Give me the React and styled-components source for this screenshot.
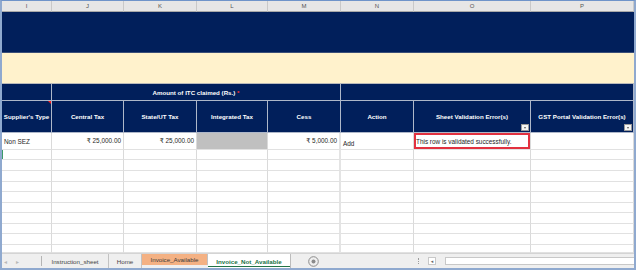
import styled, { createGlobalStyle } from 'styled-components'

const GlobalStyle = createGlobalStyle`
  html, body {
    margin: 0;
    padding: 0;
    background: #fff;
  }
  body {
    font-family: "Liberation Sans", "DejaVu Sans", Arial, sans-serif;
  }
`

const letters = ['I', 'J', 'K', 'L', 'M', 'N', 'O', 'P']
const widths = [50, 72, 73, 71, 73, 73, 117, 103]
const blankRows = [10, 11, 11, 10, 11, 10, 11, 10, 11, 8]

const headings = [
  { label: "Supplier's Type", comment: true },
  { label: 'Central Tax' },
  { label: 'State/UT Tax' },
  { label: 'Integrated Tax' },
  { label: 'Cess' },
  { label: 'Action' },
  { label: 'Sheet Validation Error(s)', filter: true },
  { label: 'GST Portal Validation Error(s)', filter: true },
]

const App = () => {
  return (
    <>
      <GlobalStyle />
      <Frame>
        <Sheet>
          {letters.map(l => (
            <LetterCell key={l}>{l}</LetterCell>
          ))}

          <Band $bg="#011f5b" />
          <Band $bg="#fff2cc" $line="#b9b9b9" />

          {/* header row 1 */}
          <HeadCell />
          <HeadCell $span={4}>
            Amount of ITC claimed (Rs.)&nbsp;<Star>*</Star>
          </HeadCell>
          <HeadCell $span={3} />

          {/* header row 2 */}
          {headings.map(h => (
            <HeadCell key={h.label}>
              {h.label}
              {h.comment && <CommentMark />}
              {h.filter && <FilterButton />}
            </HeadCell>
          ))}

          {/* data row */}
          <DataCell>Non SEZ</DataCell>
          <DataCell $align="right">₹ 25,000.00</DataCell>
          <DataCell $align="right">₹ 25,000.00</DataCell>
          <DataCell $shade />
          <DataCell $align="right" $thick>₹ 5,000.00</DataCell>
          <DataCell $bottom>Add</DataCell>
          <DataCell $flag>This row is validated successfully.</DataCell>
          <DataCell />

          {blankRows.map((h, r) =>
            widths.map((w, c) => (
              <DataCell key={r + '-' + c} $thick={c === 4} $mark={r === 0 && c === 0} />
            ))
          )}
        </Sheet>

        <TabBar>
          <NavArrows>
            <span>◂</span>
            <span>▸</span>
          </NavArrows>
          <Tab $w={67}>Instruction_sheet</Tab>
          <Tab $w={33}>Home</Tab>
          <Tab $w={66} $variant="orange">Invoice_Available</Tab>
          <Tab $w={83} $variant="active">Invoice_Not_Available</Tab>
          <AddSheet>
            <svg width="11" height="11" viewBox="0 0 11 11">
              <circle cx="5.5" cy="5.5" r="4.8" fill="none" stroke="#8a8a8a" strokeWidth="1" />
              <circle cx="5.5" cy="5.5" r="2" fill="#8a8a8a" />
            </svg>
          </AddSheet>
          <Splitter />
          <ScrollButton>◂</ScrollButton>
          <ScrollTrack />
        </TabBar>
      </Frame>
    </>
  )
}

const Frame = styled.div`
  width: 636px;
  box-sizing: border-box;
  border: 2px solid #8fa9cf;
  border-top: 1px solid #6f94c9;
  background: #fff;
`

const Sheet = styled.div`
  display: grid;
  grid-template-columns: ${widths.map(w => w + 'px').join(' ')};
  grid-template-rows: 11px 41px 31px 17px 32px 17px ${blankRows.map(h => h + 'px').join(' ')};
`

const LetterCell = styled.div`
  box-sizing: border-box;
  background: #e6e6e6;
  border-right: 1px solid #c9c9c9;
  border-bottom: 1px solid #a9a9a9;
  color: #555;
  font-size: 6px;
  display: flex;
  align-items: center;
  justify-content: center;
`

const Band = styled.div`
  grid-column: 1 / -1;
  background: ${p => p.$bg};
  border-bottom: 1px solid ${p => p.$line || '#3b4f78'};
`

const HeadCell = styled.div`
  grid-column: span ${p => p.$span || 1};
  position: relative;
  box-sizing: border-box;
  background: #011f5b;
  border-right: 1px solid #aeb7c9;
  border-bottom: 1px solid #aeb7c9;
  color: #fff;
  font-size: 6.2px;
  font-weight: 700;
  display: flex;
  align-items: center;
  justify-content: center;
  text-align: center;
  white-space: nowrap;
`

const Star = styled.span`
  color: #ff2b2b;
`

const CommentMark = styled.span`
  position: absolute;
  top: 0;
  right: 0;
  width: 0;
  height: 0;
  border-top: 3px solid #ff1a1a;
  border-left: 3px solid transparent;
`

const FilterButton = styled.span`
  position: absolute;
  right: 1px;
  bottom: 1px;
  width: 8px;
  height: 7px;
  box-sizing: border-box;
  background: #f4f4f4;
  border: 1px solid #9a9a9a;

  &::after {
    content: '';
    position: absolute;
    left: 1.5px;
    top: 2px;
    border-top: 2px solid #555;
    border-left: 1.5px solid transparent;
    border-right: 1.5px solid transparent;
  }
`

const DataCell = styled.div`
  box-sizing: border-box;
  position: relative;
  background: ${p => (p.$shade ? '#c0c0c0' : '#fff')};
  border-right: ${p => (p.$thick ? '2px solid #e4e4e4' : '1px solid #dadada')};
  border-bottom: 1px solid #e1e1e1;
  color: #1e1e1e;
  font-size: 6.4px;
  padding: 0 2px;
  display: flex;
  align-items: ${p => (p.$bottom ? 'flex-end' : 'center')};
  padding-bottom: ${p => (p.$bottom ? '2px' : '0')};
  justify-content: ${p => (p.$align === 'right' ? 'flex-end' : 'flex-start')};
  white-space: nowrap;
  box-shadow: ${p =>
    p.$flag
      ? 'inset 0 0 0 2px #e2313f'
      : p.$mark
      ? 'inset 1px 0 0 #3c9a68'
      : 'none'};
`

const TabBar = styled.div`
  height: 15px;
  display: flex;
  align-items: stretch;
  background: #efefef;
  border-top: 1px solid #d4d4d4;
  box-sizing: border-box;
  font-size: 6.2px;
  color: #444;
`

const NavArrows = styled.div`
  width: 40px;
  display: flex;
  align-items: center;
  gap: 9px;
  padding-left: 2px;
  box-sizing: border-box;
  color: #b8b8b8;
  font-size: 6px;
  border-right: 1px solid #b5b5b5;
  margin: 2px 0;
`

const tabStyles = {
  orange: `
    background: #f4b183;
    color: #3b3b3b;
    margin-bottom: 3px;
  `,
  active: `
    background: #fff;
    color: #217346;
    font-weight: 700;
    box-shadow: inset 0 -1px 0 #fff, inset 0 -2px 0 #217346;
    border-right: 1px solid #bcbcbc;
  `,
}

const Tab = styled.div`
  width: ${p => p.$w}px;
  box-sizing: border-box;
  display: flex;
  align-items: center;
  justify-content: center;
  border-right: 1px solid #c2c2c2;
  white-space: nowrap;
  ${p => tabStyles[p.$variant] || ''}
`

const AddSheet = styled.div`
  margin-left: 17px;
  display: flex;
  align-items: center;
`

const Splitter = styled.div`
  width: 1px;
  margin: 4px 0 4px 99px;
  border-left: 1px dotted #9c9c9c;
`

const ScrollButton = styled.div`
  margin: 3px 9px 3px 8px;
  width: 8px;
  box-sizing: border-box;
  background: #fff;
  border: 1px solid #c8c8c8;
  color: #666;
  font-size: 5px;
  display: flex;
  align-items: center;
  justify-content: center;
`

const ScrollTrack = styled.div`
  flex: 1;
  margin: 3px 0;
  background: #fff;
  border: 1px solid #c8c8c8;
  border-right: none;
`

export default App
